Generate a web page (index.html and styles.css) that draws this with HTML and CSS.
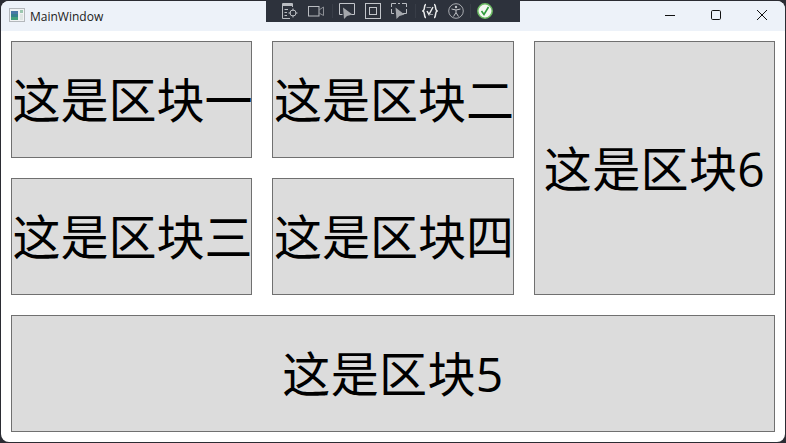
FILE: index.html
```html
<!DOCTYPE html>
<html lang="en">
<head>
    <meta charset="UTF-8">
    <title>MainWindow</title>
    <link rel="stylesheet" href="styles.css">
</head>
<body>
    <div class="window">
        <div class="titlebar">
            <svg class="app-icon" width="16" height="16" viewBox="0 0 16 16">
                <rect x="0.5" y="0.5" width="15" height="13" fill="#f1f3f4" stroke="#b4b8bc"/>
                <rect x="2" y="3" width="7" height="9" fill="#37808e"/>
                <rect x="2" y="3" width="7" height="3" fill="#4a78a8"/>
                <rect x="2" y="9" width="7" height="3" fill="#46a07c"/>
                <rect x="11" y="2" width="3" height="3" fill="#9cc7b0"/>
                <rect x="11" y="6" width="3" height="6" fill="#dfe6e4"/>
            </svg>
            <span class="title">MainWindow</span>
            <div class="controls">
                <button class="control"><svg width="12" height="12" viewBox="0 0 12 12"><path d="M1 6.5h10" stroke="#111" fill="none"/></svg></button>
                <button class="control"><svg width="12" height="12" viewBox="0 0 12 12"><rect x="1.5" y="1.5" width="9" height="9" rx="1.2" stroke="#111" fill="none"/></svg></button>
                <button class="control"><svg width="12" height="12" viewBox="0 0 12 12"><path d="M1 1l10 10M11 1L1 11" stroke="#111" fill="none"/></svg></button>
            </div>
        </div>

        <div class="content">
            <div class="block">这是区块一</div>
            <div class="block">这是区块二</div>
            <div class="block block-tall">这是区块6</div>
            <div class="block">这是区块三</div>
            <div class="block">这是区块四</div>
            <div class="block block-wide">这是区块5</div>
        </div>
    </div>

    <!-- debug toolbar sits over the title bar -->
    <div class="debug-bar">
        <svg class="tool" width="16" height="16" viewBox="0 0 16 16" fill="none" stroke="#b9bcc1">
            <path d="M10.5 4V0.5H0.5V15.5H8"/>
            <path d="M1 2H10.5" stroke-width="2"/>
            <path d="M2.5 6.5H6M2.5 9.5H5M2.5 12.5H5"/>
            <circle cx="11" cy="10" r="3"/>
            <path d="M11 5.5V8M11 12V14.5M6.5 10H9M13 10H15.5"/>
        </svg>
        <svg class="tool" width="16" height="16" viewBox="0 0 16 16" fill="none" stroke="#b9bcc1">
            <rect x="0.5" y="3.5" width="10.5" height="9.5"/>
            <path d="M11 7L15.5 4V12.5L11 10" stroke="#8d9096"/>
        </svg>
        <span class="sep"></span>
        <svg class="tool" width="16" height="16" viewBox="0 0 16 16" fill="none" stroke="#c2c5ca">
            <path d="M3.5 11.5H0.5V0.5H15.5V11.5H11.5"/>
            <path d="M4 4.5L5 16L8 13L13.5 11.5Z" fill="#a4a7ac" stroke="none"/>
        </svg>
        <svg class="tool" width="16" height="16" viewBox="0 0 16 16" fill="none" stroke="#c2c5ca">
            <rect x="0.5" y="0.5" width="15" height="15"/>
            <rect x="4.5" y="4.5" width="7" height="7"/>
        </svg>
        <svg class="tool" width="16" height="16" viewBox="0 0 16 16" fill="none" stroke="#b9bcc1">
            <path d="M0.5 4V0.5H5M7 0.5H9M11 0.5H15.5V4M15.5 6V10.5H12M0.5 6V10.5H3"/>
            <path d="M4.5 4.5L5.5 16L8.5 13L13.5 11.5Z" fill="#a4a7ac" stroke="none"/>
        </svg>
        <span class="sep"></span>
        <svg class="tool" width="16" height="16" viewBox="0 0 16 16" fill="none" stroke="#eceded" stroke-width="1.5">
            <path d="M4 1.5C1.5 1.5 3.5 7 1 8C3.5 9 1.5 14.5 4 14.5"/>
            <path d="M12 1.5C14.5 1.5 12.5 7 15 8C12.5 9 14.5 14.5 12 14.5"/>
            <path d="M5 8L7 11.5L11 4"/>
            <path d="M4.5 4.5H9M7 11.5H11" stroke-width="1" stroke="#9a9da2"/>
        </svg>
        <svg class="tool" width="16" height="16" viewBox="0 0 16 16" fill="none" stroke="#a8abb0">
            <circle cx="8" cy="8" r="7.3"/>
            <circle cx="8" cy="4" r="1.2" fill="#c4c6ca" stroke="none"/>
            <path d="M3.5 6L8 7L12.5 6M8 7V9.5M8 9.5L5.5 13.5M8 9.5L10.5 13.5" stroke="#c4c6ca"/>
        </svg>
        <span class="sep sep-last"></span>
        <svg class="tool" width="16" height="16" viewBox="0 0 16 16" fill="none">
            <circle cx="8" cy="8" r="7.2" fill="#f5f8f2" stroke="#6cbb63" stroke-width="1.5"/>
            <path d="M4.5 8L7 11.5L11.5 4" stroke="#2f9b3c" stroke-width="1.6"/>
        </svg>
    </div>
</body>
</html>
```

FILE: styles.css
```css
html, body {
    margin: 0;
    padding: 0;
    height: 100%;
}

body {
    background-color: #2b2c33;
    font-family: 'Open Sans', 'Noto Sans CJK SC', sans-serif;
    overflow: hidden;
    position: relative;
}

.window {
    margin: 1px 1px 0 1px;
    height: 441px;
    background-color: white;
    border-radius: 8px;
    overflow: hidden;
    display: flex;
    flex-direction: column;
}

.titlebar {
    height: 30px;
    background-color: #edf2f9;
    display: flex;
    align-items: center;
    flex-shrink: 0;
}

.app-icon {
    margin-left: 8px;
    margin-right: 5px;
}

.title {
    font-family: 'Open Sans', 'Liberation Sans', sans-serif;
    font-size: 12px;
    color: #1a1a1a;
}

.controls {
    margin-left: auto;
    display: flex;
}

.control {
    width: 46px;
    height: 30px;
    padding: 0;
    background: none;
    border: none;
    display: flex;
    justify-content: center;
    align-items: center;
}

.control svg {
    margin-bottom: 2px;
}

.content {
    flex: 1;
    display: grid;
    grid-template-columns: 241px 242px 241px;
    grid-template-rows: repeat(3, 117px);
    gap: 20px;
    padding: 10px;
}

.block {
    box-sizing: border-box;
    background-color: #dcdcdc;
    border: 1px solid #707070;
    padding: 0 0 5px 2px;
    color: black;
    font-size: 48px;
    display: flex;
    justify-content: center;
    align-items: center;
    white-space: nowrap;
    overflow: hidden;
}

.block-tall {
    grid-column: 3;
    grid-row: 1 / span 2;
    padding-left: 0;
    letter-spacing: 0.4px;
}

.block-wide {
    grid-column: 1 / span 3;
    padding-left: 0;
    letter-spacing: 0.4px;
}

.debug-bar {
    position: absolute;
    left: 266px;
    top: 0;
    box-sizing: border-box;
    width: 254px;
    height: 22px;
    padding-left: 16px;
    background-color: #2d323c;
    display: flex;
    align-items: center;
}

.tool {
    flex-shrink: 0;
}

.tool + .tool {
    margin-left: 10px;
}

.sep {
    width: 1px;
    height: 14px;
    margin: 0 6px 0 8px;
    background-color: #383d47;
    flex-shrink: 0;
}

.sep-last {
    margin-left: 6px;
}
```
